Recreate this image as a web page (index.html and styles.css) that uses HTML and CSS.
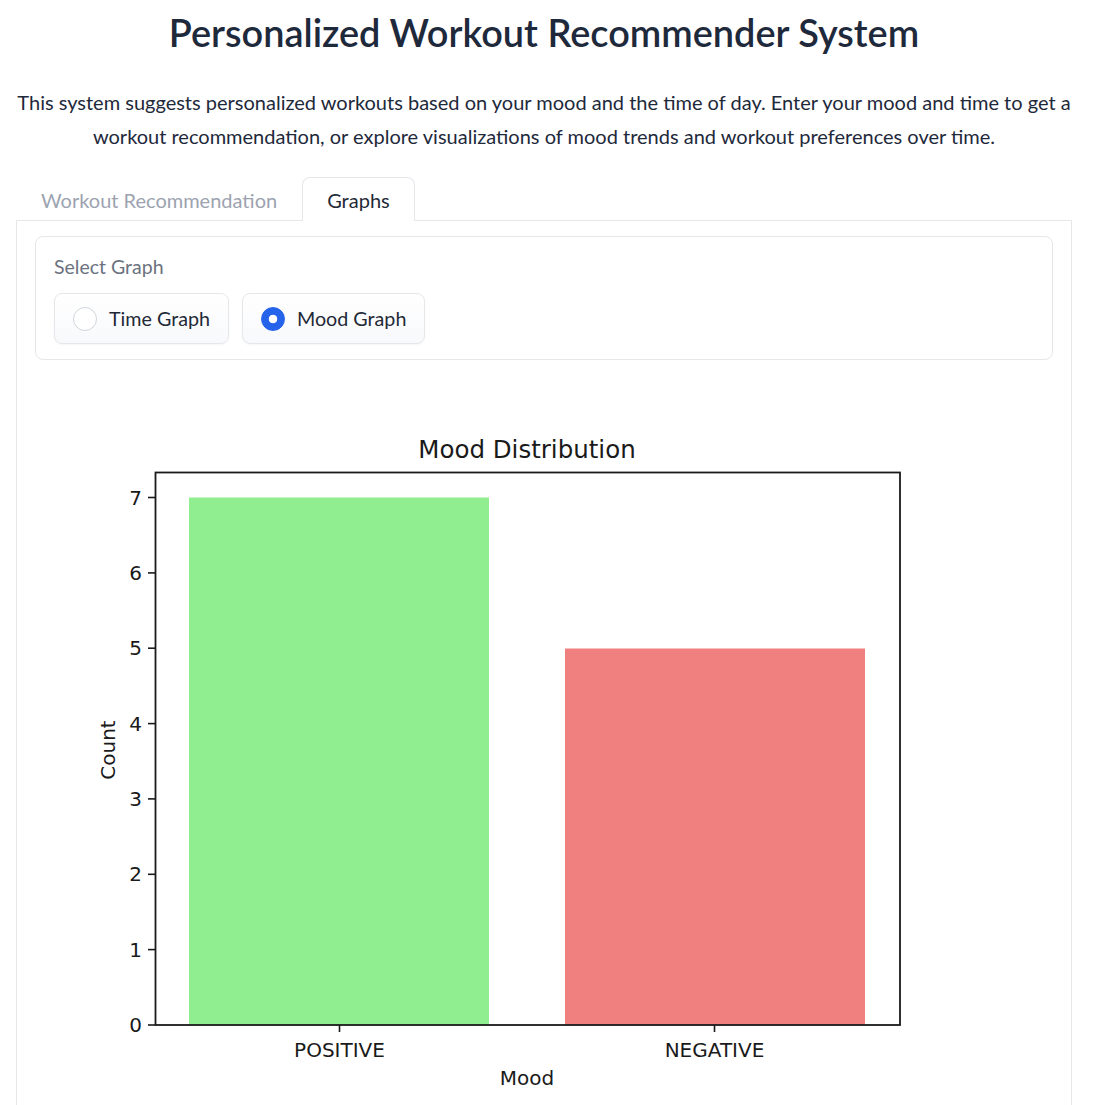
FILE: index.html
```html
<!DOCTYPE html>
<html lang="en">
<head>
<meta charset="utf-8">
<title>Personalized Workout Recommender System</title>
<link rel="stylesheet" href="styles.css">
</head>
<body>
<div class="app">
  <h1 class="title">Personalized Workout Recommender System</h1>
  <p class="intro">This system suggests personalized workouts based on your mood and the time of day. Enter your mood and time to get a workout recommendation, or explore visualizations of mood trends and workout preferences over time.</p>

  <div class="tabs">
    <div class="tab-nav">
      <button class="tab">Workout Recommendation</button>
      <button class="tab tab-selected">Graphs</button>
    </div>
    <div class="tab-panel">
      <div class="block">
        <div class="block-label">Select Graph</div>
        <div class="radio-group">
          <label class="radio-option">
            <span class="radio-dot"></span>
            <span class="radio-text">Time Graph</span>
          </label>
          <label class="radio-option">
            <span class="radio-dot radio-dot-checked"></span>
            <span class="radio-text">Mood Graph</span>
          </label>
        </div>
      </div>

      <div class="plot">
        <svg class="chart" width="1018" height="760" viewBox="35 376 1018 760" xmlns="http://www.w3.org/2000/svg">
          <text class="chart-title" x="527" y="458" text-anchor="middle">Mood Distribution</text>
          <rect x="189" y="497.5" width="300" height="527.5" fill="#90ee90"/>
          <rect x="565" y="648.5" width="300" height="376.5" fill="#f08080"/>
          <rect x="155.5" y="472.5" width="744.5" height="552.5" fill="none" stroke="#1a1a1a" stroke-width="1.8"/>
          <g stroke="#1a1a1a" stroke-width="1.6">
            <line x1="148" y1="1025" x2="155" y2="1025"/>
            <line x1="148" y1="949.6" x2="155" y2="949.6"/>
            <line x1="148" y1="874.3" x2="155" y2="874.3"/>
            <line x1="148" y1="798.9" x2="155" y2="798.9"/>
            <line x1="148" y1="723.6" x2="155" y2="723.6"/>
            <line x1="148" y1="648.2" x2="155" y2="648.2"/>
            <line x1="148" y1="572.9" x2="155" y2="572.9"/>
            <line x1="148" y1="497.5" x2="155" y2="497.5"/>
            <line x1="339.5" y1="1025" x2="339.5" y2="1032"/>
            <line x1="714.5" y1="1025" x2="714.5" y2="1032"/>
          </g>
          <g class="tick-label" text-anchor="end">
            <text x="142" y="1032">0</text>
            <text x="142" y="956.6">1</text>
            <text x="142" y="881.3">2</text>
            <text x="142" y="805.9">3</text>
            <text x="142" y="730.6">4</text>
            <text x="142" y="655.2">5</text>
            <text x="142" y="579.9">6</text>
            <text x="142" y="504.5">7</text>
          </g>
          <g class="tick-label" text-anchor="middle">
            <text x="339.5" y="1057">POSITIVE</text>
            <text x="714.5" y="1057">NEGATIVE</text>
          </g>
          <text class="axis-label" x="527" y="1085" text-anchor="middle">Mood</text>
          <text class="axis-label" x="115" y="750" text-anchor="middle" transform="rotate(-90 115 750)">Count</text>
        </svg>
      </div>
    </div>
  </div>
</div>
</body>
</html>
```

FILE: styles.css
```css
* { box-sizing: border-box; }

html, body {
  margin: 0;
  padding: 0;
  background: #ffffff;
}

body {
  font-family: "Lato", "Liberation Sans", sans-serif;
  color: #1f2937;
}

.app {
  padding: 0 22px 0 16px;
}

.title {
  margin: 11px 0 0;
  text-align: center;
  font-size: 37.9px;
  line-height: 44px;
  font-weight: 600;
  color: #1e293b;
}

.intro {
  margin: 30px 0 0;
  text-align: center;
  font-size: 20px;
  line-height: 34px;
  color: #1e293b;
}

.tabs {
  margin-top: 24px;
}

.tab-nav {
  display: flex;
  height: 44px;
  position: relative;
  z-index: 1;
}

.tab {
  font-family: inherit;
  font-size: 20px;
  background: transparent;
  border: 1px solid transparent;
  border-bottom: none;
  border-radius: 8px 8px 0 0;
  padding: 0 24px;
  height: 44px;
  color: #9ca3af;
  cursor: pointer;
}

.tab-selected {
  background: #ffffff;
  border-color: #e5e7eb;
  color: #1f2937;
}

.tab-panel {
  margin-top: -1px;
  border: 1px solid #e5e7eb;
  border-bottom: none;
  padding: 15px 18px 0;
}

.block {
  border: 1px solid #e5e7eb;
  border-radius: 8px;
  padding: 18px 18px 15px;
}

.block-label {
  font-size: 19.5px;
  line-height: 24px;
  color: #6b7280;
}

.radio-group {
  display: flex;
  gap: 13px;
  margin-top: 14px;
}

.radio-option {
  display: flex;
  align-items: center;
  gap: 12px;
  height: 51px;
  padding: 0 18px;
  border: 1px solid #e5e7eb;
  border-radius: 8px;
  background: linear-gradient(to bottom, #ffffff, #f8f9fb);
  box-shadow: 0 1px 2px rgba(0, 0, 0, 0.04);
}

.radio-dot {
  width: 24px;
  height: 24px;
  border-radius: 50%;
  border: 1px solid #d1d5db;
  background: #ffffff;
  flex: none;
}

.radio-dot-checked {
  border-color: #2563eb;
  background: radial-gradient(circle, #ffffff 0 4px, #2563eb 4.6px);
}

.radio-text {
  font-size: 19.7px;
  color: #1f2937;
}

.plot {
  margin-top: 16px;
}

.chart {
  display: block;
  font-family: "DejaVu Sans", sans-serif;
}

.chart-title {
  font-size: 24.5px;
  fill: #1a1a1a;
}

.tick-label {
  font-size: 20px;
  fill: #1a1a1a;
}

.axis-label {
  font-size: 20px;
  fill: #1a1a1a;
}
```
